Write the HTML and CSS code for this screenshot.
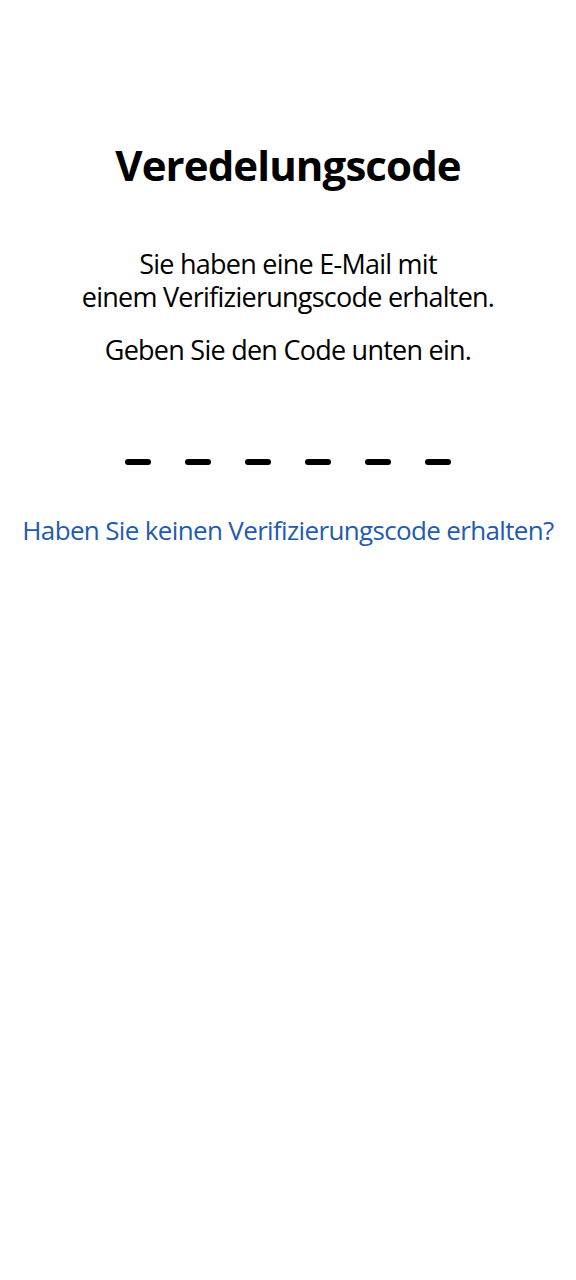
FILE: index.html
```html
<!DOCTYPE html>
<html lang="de">
<head>
    <meta charset="UTF-8">
    <meta name="viewport" content="width=device-width, initial-scale=1.0">
    <title>Veredelungscode</title>
    <link rel="stylesheet" href="styles.css">
</head>
<body>
    <div class="main">
        <h1 class="title">Veredelungscode</h1>
        <p class="info">Sie haben eine E-Mail mit<br>einem Verifizierungscode erhalten.</p>
        <p class="info hint">Geben Sie den Code unten ein.</p>
        <div class="code">
            <span class="digit"></span>
            <span class="digit"></span>
            <span class="digit"></span>
            <span class="digit"></span>
            <span class="digit"></span>
            <span class="digit"></span>
        </div>
        <a class="resend" href="#">Haben Sie keinen Verifizierungscode erhalten?</a>
    </div>
</body>
</html>
```

FILE: styles.css
```css
body {
    margin: 0;
    background: #fff;
    font-family: "Open Sans", sans-serif;
    color: #000;
}
.main {
    display: flex;
    flex-direction: column;
    align-items: center;
    padding-top: 137px;
}
.title {
    margin: 0;
    font-size: 42px;
    font-weight: 700;
    letter-spacing: -0.9px;
    line-height: 56px;
}
.info {
    margin: 54px 0 0 0;
    font-size: 27px;
    line-height: 33px;
    letter-spacing: -0.75px;
    text-align: center;
}
.hint {
    margin-top: 20px;
}
.code {
    display: flex;
    gap: 34px;
    margin-top: 93px;
}
.digit {
    width: 26px;
    height: 6px;
    border-radius: 3px;
    background: #000;
}
.resend {
    margin-top: 47px;
    font-size: 26px;
    letter-spacing: -0.65px;
    color: #1f5baf;
    text-decoration: none;
}
```
